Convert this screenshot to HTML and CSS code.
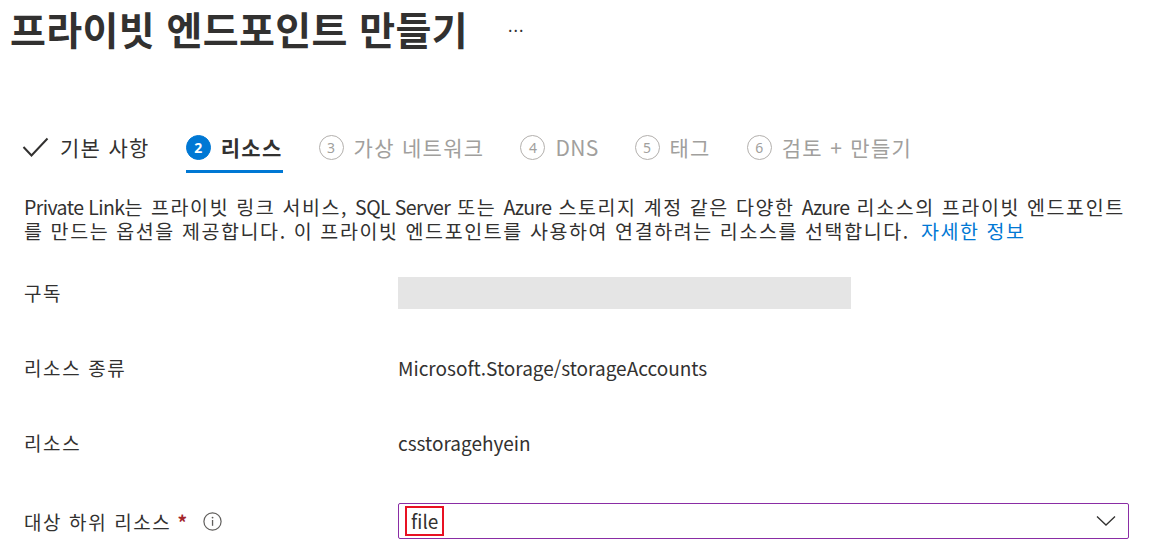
FILE: index.html
```html
<!DOCTYPE html>
<html lang="ko">
<head>
<meta charset="utf-8">
<link rel="stylesheet" href="styles.css">
</head>
<body>
<div class="page">
  <header class="title-bar">
    <h1 class="title">프라이빗 엔드포인트 만들기</h1>
    <span class="more">···</span>
  </header>

  <nav class="tabs">
    <div class="tab done">
      <svg class="check" width="27" height="22" viewBox="0 0 27 22"><path d="M1.5 11 L9.5 19.5 L25.5 2.5" fill="none" stroke="#323130" stroke-width="2"/></svg>
      <span>기본 사항</span>
    </div>
    <div class="tab active">
      <span class="num">2</span>
      <span>리소스</span>
    </div>
    <div class="tab off">
      <span class="num">3</span>
      <span>가상 네트워크</span>
    </div>
    <div class="tab off">
      <span class="num">4</span>
      <span class="lat-tab">DNS</span>
    </div>
    <div class="tab off">
      <span class="num">5</span>
      <span>태그</span>
    </div>
    <div class="tab off">
      <span class="num">6</span>
      <span>검토 + 만들기</span>
    </div>
  </nav>

  <p class="desc"><span class="lat">Private Link</span>는 프라이빗 링크 서비스, <span class="lat">SQL Server</span> 또는 <span class="lat">Azure</span> 스토리지 계정 같은 다양한 <span class="lat">Azure</span> 리소스의 프라이빗 엔드포인트를 만드는 옵션을 제공합니다. 이 프라이빗 엔드포인트를 사용하여 연결하려는 리소스를 선택합니다. <a class="link" href="#">자세한 정보</a></p>

  <div class="form">
    <div class="row">
      <div class="label">구독</div>
      <div class="value"><div class="blank"></div></div>
    </div>
    <div class="row">
      <div class="label">리소스 종류</div>
      <div class="value">Microsoft.Storage/storageAccounts</div>
    </div>
    <div class="row">
      <div class="label">리소스</div>
      <div class="value">csstoragehyein</div>
    </div>
    <div class="row last">
      <div class="label">대상 하위 리소스<span class="req">*</span>
        <svg class="info" width="19" height="19" viewBox="0 0 19 19"><circle cx="9.5" cy="9.5" r="8.6" fill="none" stroke="#605e5c" stroke-width="1.2"/><rect x="8.9" y="8" width="1.3" height="5.8" fill="#605e5c"/><circle cx="9.55" cy="5.6" r="0.9" fill="#605e5c"/></svg>
      </div>
      <div class="value">
        <div class="select">
          <span class="sel-text">file</span>
          <svg class="chev" width="20" height="12" viewBox="0 0 20 12"><path d="M1 1.5 L10 10 L19 1.5" fill="none" stroke="#323130" stroke-width="1.3"/></svg>
        </div>
      </div>
    </div>
  </div>
</div>
</body>
</html>
```

FILE: styles.css
```css
* { box-sizing: border-box; }
html, body { margin: 0; padding: 0; background: #fff; }
body {
  font-family: "Noto Sans CJK KR", "Noto Sans", sans-serif;
  color: #323130;
  overflow: hidden;
}
.page { width: 1153px; height: 550px; }

.title-bar {
  display: flex;
  align-items: center;
  padding: 0 0 0 10px;
  height: 56px;
}
.title {
  margin: 0;
  font-size: 39px;
  font-weight: 700;
  letter-spacing: 0.4px;
  line-height: 56px;
  color: #323130;
}
.more {
  margin-left: 40px;
  font-size: 16px;
  color: #323130;
  letter-spacing: 1px;
  position: relative;
  top: 2px;
}

.tabs {
  display: flex;
  align-items: center;
  margin-top: 69px;
  padding-left: 22px;
  height: 44px;
  font-size: 21px;
  letter-spacing: 1.3px;
}
.tab {
  display: flex;
  align-items: center;
  gap: 10px;
  height: 44px;
  margin-right: 36px;
  position: relative;
  color: #a19f9d;
}
.tab.done { color: #323130; gap: 11px; }
.tab.active { color: #323130; font-weight: 700; }
.tab.active::after {
  content: "";
  position: absolute;
  left: 0; right: 0; bottom: -4px;
  height: 3px;
  background: #0078d4;
}
.lat-tab { letter-spacing: 0.3px; }
.num {
  width: 25px;
  height: 25px;
  border-radius: 50%;
  border: 1.5px solid #b3b0ad;
  display: inline-flex;
  align-items: center;
  justify-content: center;
  font-size: 14px;
  font-weight: 400;
  letter-spacing: 0;
  color: #a19f9d;
  font-family: "Noto Sans", sans-serif;
}
.tab.active .num {
  background: #0078d4;
  border-color: #0078d4;
  color: #fff;
  font-weight: 700;
}

.desc {
  margin: 26px 0 0 24px;
  width: 1110px;
  font-size: 19.5px;
  letter-spacing: 1.6px;
  line-height: 24px;
  color: #323130;
  word-break: break-all;
}
.lat { letter-spacing: -0.6px; }
.link { color: #0078d4; text-decoration: none; margin-left: 4px; }

.form { margin-top: 12px; padding-left: 24px; }
.row {
  display: flex;
  align-items: center;
  height: 75px;
  font-size: 19px;
}
.row.last { height: 36px; margin-top: 23px; }
.label { width: 374px; display: flex; align-items: center; letter-spacing: 1.6px; }
.req { color: #a4262c; margin-left: 6px; font-weight: 700; }
.info { margin-left: 14px; }
.value { flex: 1; }
.blank { width: 453px; height: 32px; background: #e5e5e5; }
.select {
  width: 731px;
  height: 36px;
  border: 1.5px solid #8a2da5;
  border-radius: 2px;
  display: flex;
  align-items: center;
  justify-content: space-between;
  padding: 0 12px 0 6px;
}
.sel-text {
  border: 2px solid #e81123;
  padding: 0 4px;
  height: 30px;
  line-height: 25px;
  color: #323130;
}
```
